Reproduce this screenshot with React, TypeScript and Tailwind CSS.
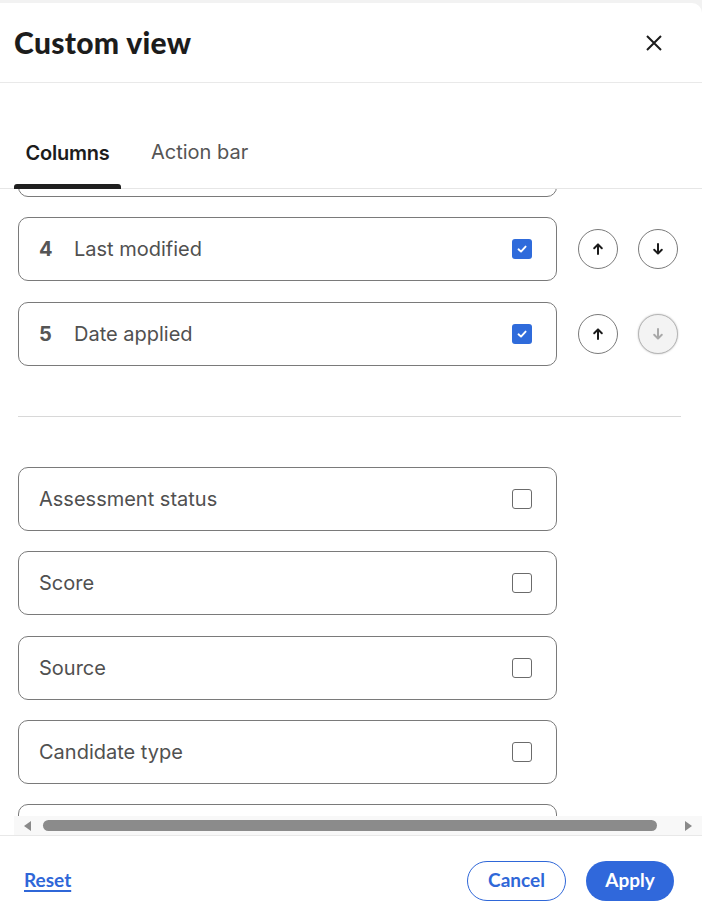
import React from 'react';

const body = { fontFamily: 'Inter, "Noto Sans", sans-serif' };
const head = { fontFamily: 'Lato, "Open Sans", sans-serif' };

const selected = [
  { n: 4, label: 'Last modified', downDisabled: false },
  { n: 5, label: 'Date applied', downDisabled: true },
];

const available = ['Assessment status', 'Score', 'Source', 'Candidate type'];

const Check = ({ on }: { on: boolean }) =>
  on ? (
    <span className="w-[20px] h-[20px] rounded-[3px] bg-[#2f6bdb] flex items-center justify-center">
      <svg width="12" height="12" viewBox="0 0 12 12" fill="none">
        <path d="M2.5 6.3 L5 8.6 L9.6 3.6" stroke="white" strokeWidth="1.9" strokeLinecap="round" strokeLinejoin="round" />
      </svg>
    </span>
  ) : (
    <span className="w-[20px] h-[20px] rounded-[3px] border border-[#6b6b6b] bg-white" />
  );

const Arrow = ({ up, disabled }: { up: boolean; disabled?: boolean }) => (
  <button
    className={`w-[40px] h-[40px] rounded-full flex items-center justify-center border ${
      disabled ? 'bg-[#f3f3f3] border-[#b5b5b5] shadow-[0_0_2px_rgba(0,0,0,0.25)]' : 'bg-white border-[#7a7a7a]'
    }`}
  >
    <svg width="14" height="14" viewBox="0 0 14 14" fill="none" className={up ? '' : 'rotate-180'}>
      <path d="M7 12 V2.5 M3.2 6.2 L7 2.4 L10.8 6.2" stroke={disabled ? '#a9a9a9' : '#1b1b1b'} strokeWidth="2" strokeLinecap="round" strokeLinejoin="round" />
    </svg>
  </button>
);

const App: React.FC = () => {
  return (
    <div className="w-[702px] h-[917px] bg-[#f2f2f2] pt-[3px] overflow-hidden" style={body}>
      <div className="h-[914px] bg-white rounded-tr-[10px] flex flex-col">
        <header className="h-[80px] shrink-0 border-b border-[#e9e9e9] flex items-center justify-between pl-[14px] pr-[40px]">
          <h1 className="text-[30px] font-black text-[#1c1c1c] tracking-[0.3px]" style={head}>Custom view</h1>
          <svg width="16" height="16" viewBox="0 0 16 16" fill="none">
            <path d="M1 1 L15 15 M15 1 L1 15" stroke="#1c1c1c" strokeWidth="2" />
          </svg>
        </header>

        <nav className="h-[106px] shrink-0 border-b border-[#e6e6e6] flex items-end pl-[14px]">
          <div className="flex flex-col items-center w-[107px]">
            <span className="text-[20px] font-semibold text-[#1c1c1c] pb-[16px] tracking-[-0.2px]">Columns</span>
            <span className="h-[5px] w-full bg-[#1f1f1f] rounded-t-[3px] -mb-px" />
          </div>
          <span className="text-[20px] text-[#555] ml-[30px] pb-[21px]">Action bar</span>
        </nav>

        <div className="flex-1 relative overflow-hidden">
          <div className="h-[627px] overflow-hidden pl-[18px]">
            <div className="-mt-[56px] flex flex-col gap-[20.3px]">
              <div className="w-[539px] h-[64px] rounded-[10px] border border-[#7a7a7a] shrink-0" />
              {selected.map((s) => (
                <div key={s.n} className="flex items-center gap-[20px]">
                  <div className="w-[539px] h-[64px] rounded-[10px] border border-[#7a7a7a] flex items-center pl-[20px] pr-[24px]">
                    <span className="w-[35px] text-[20px] font-bold text-[#555]">{s.n}</span>
                    <span className="flex-1 text-[20px] text-[#505050]">{s.label}</span>
                    <Check on />
                  </div>
                  <div className="flex gap-[20px] pl-px">
                    <Arrow up />
                    <Arrow up={false} disabled={s.downDisabled} />
                  </div>
                </div>
              ))}
              <div className="w-[663px] h-px bg-[#d8d8d8] mt-[30px] mb-[30px] shrink-0" />
              {available.map((a) => (
                <div key={a} className="w-[539px] h-[64px] rounded-[10px] border border-[#7a7a7a] flex items-center pl-[20px] pr-[24px] shrink-0">
                  <span className="flex-1 text-[20px] text-[#505050]">{a}</span>
                  <Check on={false} />
                </div>
              ))}
              <div className="w-[539px] h-[64px] rounded-[10px] border border-[#7a7a7a] shrink-0" />
            </div>
          </div>
          <div className="h-[19px] bg-[#f8f8f8] flex items-center ml-[14px] pl-[9px] pr-[9px] gap-[12px]">
            <svg width="8" height="10" viewBox="0 0 8 10"><path d="M8 0 V10 L1 5 Z" fill="#8a8a8a" /></svg>
            <div className="h-[11px] w-[614px] rounded-full bg-[#8b8b8b]" />
            <div className="flex-1" />
            <svg width="8" height="10" viewBox="0 0 8 10"><path d="M0 0 V10 L7 5 Z" fill="#8a8a8a" /></svg>
          </div>
        </div>

        <footer className="h-[82px] shrink-0 border-t border-[#e8e8e8] flex items-center justify-between pl-[24px] pr-[28px] pt-[8px]" style={head}>
          <a className="text-[19px] font-bold text-[#2f67d8] underline underline-offset-[3px] decoration-[1.5px]">Reset</a>
          <div className="flex gap-[20px]">
            <button className="w-[99px] h-[40px] rounded-full border border-[#2f67d8] text-[19px] font-bold text-[#2f67d8]">Cancel</button>
            <button className="w-[88px] h-[40px] rounded-full bg-[#3068db] text-[19px] font-bold text-white">Apply</button>
          </div>
        </footer>
      </div>
    </div>
  );
};

export default App;
